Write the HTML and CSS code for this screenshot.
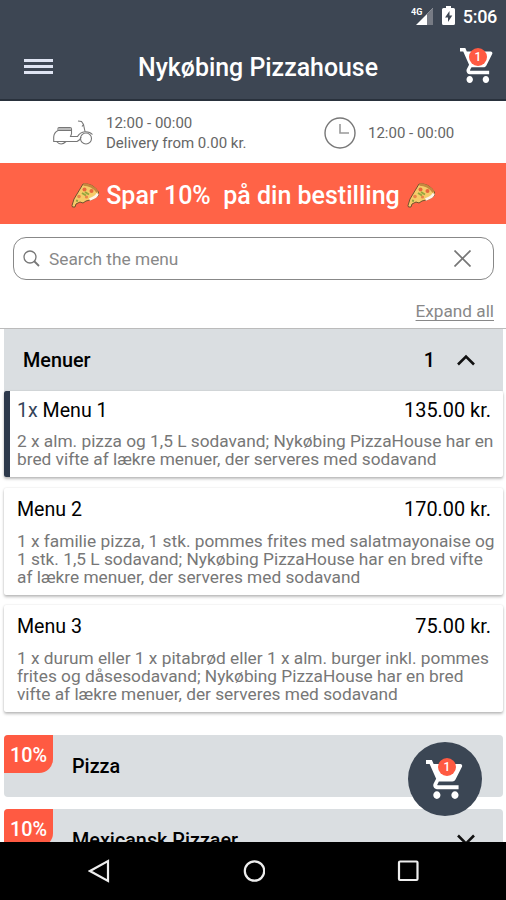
FILE: index.html
```
<!DOCTYPE html>
<html lang="da">
<head>
	<meta charset="utf-8">
	<title>Nykøbing Pizzahouse</title>
	<link rel="stylesheet" href="styles.css">
</head>
<body>
	<!-- Shared icons. -->
	<svg class="sprite" width="0" height="0">
		<symbol id="cart" viewBox="1 2 21 20" preserveAspectRatio="none">
			<path d="M7 18c-1.1 0-1.99.9-1.99 2S5.9 22 7 22s2-.9 2-2-.9-2-2-2zM1 2v2h2l3.6 7.59-1.35 2.45c-.16.28-.25.61-.25.96 0 1.1.9 2 2 2h12v-2H7.42c-.14 0-.25-.11-.25-.25l.03-.12.9-1.63h7.45c.75 0 1.41-.41 1.75-1.03l3.58-6.49c.08-.14.12-.31.12-.48 0-.55-.45-1-1-1H5.21l-.94-2H1zm16 16c-1.1 0-1.99.9-1.99 2s.89 2 1.99 2 2-.9 2-2-.9-2-2-2z"/>
		</symbol>
		<symbol id="pizza" viewBox="0 0 28 26">
			<path d="M1 23.500L3 17L12 2Q22 1 27.500 10L27 14Q23 18 15 19L12 21L9 20L5 22L4 25L1.500 25z" fill="#f6cb69" stroke="#70512f" stroke-width="1"/>
			<path d="M12.500 2.500Q21 2.500 26.500 10" fill="none" stroke="#c4883f" stroke-width="2.600"/>
			<path d="M26.500 11.500Q26 15 18.500 17.500" fill="none" stroke="#fff3ea" stroke-width="2.600"/>
			<circle cx="13.500" cy="7.500" r="2" fill="#e8683c"/>
			<circle cx="20.500" cy="9" r="2" fill="#e8683c"/>
			<circle cx="8" cy="14.500" r="1.800" fill="#e8844a"/>
			<circle cx="15.500" cy="15" r="1.600" fill="#e8844a"/>
			<path d="M11 11L15 13.500M14 10L18 12.500M5 18.500L7 19" stroke="#93a63f" stroke-width="1.900"/>
		</symbol>
	</svg>

	<div class="app">
		<header class="top">
			<div class="status">
				<svg class="signal" width="24" height="20" viewBox="0 0 24 20">
					<path d="M5 19L22 2V19z" fill="#fff"/>
					<path d="M16 8L22 2V19H16z" fill="#777b84"/>
					<text x="0" y="9" class="signal-text">4G</text>
				</svg>
				<svg class="battery" width="13" height="19" viewBox="0 0 13 19">
					<path d="M4 0h5v2h2.500q1.500 0 1.500 1.500v14q0 1.500-1.500 1.500h-10q-1.500 0-1.500-1.500v-14q0-1.500 1.500-1.500h2.500z" fill="#fff"/>
					<path d="M7.500 5L3 11.500h3V16l4.300-6.500H7.500z" fill="#3d4653"/>
				</svg>
				<span class="time">5:06</span>
			</div>
			<div class="bar">
				<div class="burger"><i></i><i></i><i></i></div>
				<h1>Nykøbing Pizzahouse</h1>
				<div class="cart">
					<svg width="34" height="35"><use href="#cart"/></svg>
					<span class="count">1</span>
				</div>
			</div>
		</header>

		<!-- Opening hours. -->
		<div class="hours">
			<svg class="scooter" width="40" height="26" viewBox="0 0 40 26">
				<g fill="none" stroke="#777" stroke-width="1.100">
					<path d="M5 10.500V8.500Q5 7.500 6 7.500H17Q18.500 7.500 18.500 9V14L17.500 16.500H24.500Q27 12 32 11.700Q37 11.500 39.500 14.500"/>
					<path d="M5 10.500H18.500M5 10.500Q1 12.500 .700 17V21.500H24Q27.500 20 28 17"/>
					<path d="M3.500 21.500Q8 26.500 13 21.500M25 1L28.500 1.500L30.500 4.500L29 6.500M30.500 4.500L32 11.500"/>
					<circle cx="33" cy="18.500" r="5.500"/>
				</g>
				<path d="M6 9H18" stroke="#bbb" stroke-width="2"/>
			</svg>
			<div class="delivery">12:00 - 00:00<br>Delivery from 0.00 kr.</div>
			<svg class="clock" width="32" height="32" viewBox="0 0 32 32">
				<circle cx="16" cy="16" r="15" fill="none" stroke="#777" stroke-width="1.400"/>
				<path d="M16 7V16H25" fill="none" stroke="#999" stroke-width="1.600"/>
			</svg>
			<div class="pickup">12:00 - 00:00</div>
		</div>

		<div class="offer">
			<svg width="28" height="26"><use href="#pizza"/></svg>
			<span>Spar 10%&nbsp; på din bestilling</span>
			<svg width="28" height="26"><use href="#pizza"/></svg>
		</div>

		<div class="search">
			<svg width="17" height="17" viewBox="0 0 17 17"><path d="M11 11L16 16" stroke="#777" stroke-width="1.800"/><circle cx="7" cy="7" r="6" fill="none" stroke="#777" stroke-width="1.300"/></svg>
			<span>Search the menu</span>
			<svg class="clear" width="17" height="17" viewBox="0 0 17 17"><path d="M.5.500L16.500 16.500M16.500.500L.5 16.500" stroke="#777" stroke-width="1.700"/></svg>
		</div>
		<div class="expand"><span>Expand all</span></div>

		<main>
			<div class="group open">
				<span class="name">Menuer</span>
				<span class="number">1</span>
				<svg width="18" height="12" viewBox="0 0 18 12"><path d="M1 10.500L9 2.500L17 10.500" fill="none" stroke="#111" stroke-width="2.600"/></svg>
			</div>
			<div class="item selected">
				<div class="line"><span><b>1x</b> Menu 1</span><span class="price">135.00 kr.</span></div>
				<p>2 x alm. pizza og 1,5 L sodavand; Nykøbing PizzaHouse har en<br>bred vifte af lækre menuer, der serveres med sodavand</p>
			</div>
			<div class="item">
				<div class="line"><span>Menu 2</span><span class="price">170.00 kr.</span></div>
				<p>1 x familie pizza, 1 stk. pommes frites med salatmayonaise og<br>1 stk. 1,5 L sodavand; Nykøbing PizzaHouse har en bred vifte<br>af lækre menuer, der serveres med sodavand</p>
			</div>
			<div class="item">
				<div class="line"><span>Menu 3</span><span class="price">75.00 kr.</span></div>
				<p>1 x durum eller 1 x pitabrød eller 1 x alm. burger inkl. pommes<br>frites og dåsesodavand; Nykøbing PizzaHouse har en bred<br>vifte af lækre menuer, der serveres med sodavand</p>
			</div>
			<div class="group closed first">
				<span class="discount">10%</span>
				<span class="name">Pizza</span>
			</div>
			<div class="group closed">
				<span class="discount">10%</span>
				<span class="name">Mexicansk Pizzaer</span>
				<svg width="18" height="12" viewBox="0 0 18 12"><path d="M1 1.500L9 9.500L17 1.500" fill="none" stroke="#111" stroke-width="2.600"/></svg>
			</div>
		</main>

		<!-- Floating cart button. -->
		<div class="fab">
			<div class="cart">
				<svg width="38" height="39"><use href="#cart"/></svg>
				<span class="count">1</span>
			</div>
		</div>

		<nav class="android">
			<svg width="22" height="24" viewBox="0 0 22 24"><path d="M2 12L20 2V22z"/></svg>
			<svg width="22" height="24" viewBox="0 0 22 24"><circle cx="11.500" cy="12" r="9.700"/></svg>
			<svg width="22" height="24" viewBox="0 0 22 24"><rect x="2" y="2.500" width="18.500" height="18.500" rx="1"/></svg>
		</nav>
	</div>
</body>
</html>
```
FILE: styles.css
```
* {
	box-sizing: border-box;
}

body {
	margin: 0;
	font-family: Roboto, sans-serif;
	background: #fff;
}

svg {
	display: block;
	flex: none;
}

.sprite {
	display: none;
}

/* The whole screen, cut off at the bottom by the system buttons. */
.app {
	position: relative;
	display: flex;
	flex-direction: column;
	width: 506px;
	height: 900px;
	overflow: hidden;
	white-space: nowrap;
}

.top {
	flex: none;
	height: 101px;
	background: #3d4653;
	border-bottom: 2px solid #29313c;
	color: #fff;
}

.status {
	display: flex;
	justify-content: flex-end;
	height: 33px;
	padding: 6px 9px 0 0;
}

.signal-text {
	font-size: 9px;
	font-weight: 700;
	fill: #fff;
}

.battery {
	margin: 0 8px 0 7px;
}

.time {
	font-size: 18px;
	font-weight: 500;
	line-height: 21px;
	letter-spacing: -0.3px;
}

.bar {
	display: flex;
	align-items: center;
	height: 66px;
	padding: 0 12px 0 24px;
}

.burger {
	display: grid;
	gap: 3px;
	width: 29px;
}

.burger i {
	height: 3px;
	background: #dfe4f2;
}

h1 {
	margin: 2px auto 0 85px;
	font-size: 24.9px;
	font-weight: 500;
}

.cart {
	position: relative;
	fill: #fff;
}

.bar .cart {
	margin-bottom: 2px;
}

.count {
	position: absolute;
	top: 0;
	left: 9px;
	width: 18px;
	height: 18px;
	border-radius: 50%;
	background: #ff5a42;
	color: #fff;
	font-size: 12px;
	font-weight: 500;
	line-height: 18px;
	text-align: center;
}

.hours {
	display: flex;
	flex: none;
	align-items: center;
	height: 62px;
	padding: 2px 0 0 53px;
	color: #666;
	font-size: 15px;
	line-height: 20px;
}

.delivery {
	width: 142px;
	margin: 0 76px 0 13px;
}

.pickup {
	margin-left: 12px;
}

.offer {
	display: flex;
	flex: none;
	align-items: center;
	justify-content: center;
	gap: 7px;
	height: 61px;
	padding-top: 3px;
	background: #ff6347;
	color: #fff;
	font-size: 25px;
	font-weight: 500;
}

.search {
	display: flex;
	flex: none;
	align-items: center;
	height: 43px;
	margin: 13px 12px 0 13px;
	padding: 0 22px 0 9px;
	border: 1px solid #888;
	border-radius: 13px;
	color: #888;
	font-size: 17.3px;
}

.search span {
	margin: 1px auto 0 9px;
}

.expand {
	flex: none;
	height: 49px;
	padding: 21px 12px 0 0;
	border-bottom: 1px solid #bbb;
	color: #888;
	font-size: 17.2px;
	line-height: 20px;
	text-align: right;
}

.expand span {
	text-decoration: underline;
	text-underline-offset: 3px;
}

main {
	flex: 1;
	min-height: 0;
	padding: 0 3px 0 4px;
	overflow: hidden;
}

.group {
	display: flex;
	align-items: center;
	height: 62px;
	padding: 0 28px 0 19px;
	background: #dadee1;
	font-size: 19.8px;
	font-weight: 500;
}

.number {
	margin: 0 22px 0 auto;
}

.item {
	height: 107px;
	margin-bottom: 10px;
	padding: 10px 12px 0 13px;
	border-radius: 2px;
	box-shadow: 0 2px 3px rgba(0, 0, 0, 0.25), 0 0 2px rgba(0, 0, 0, 0.12);
}

.line {
	display: flex;
	justify-content: space-between;
	font-size: 19.6px;
	line-height: 24px;
}

.line b {
	color: #34445a;
	font-weight: 400;
}

.price {
	font-size: 19.9px;
}

.item p {
	margin: 10px 0 0;
	color: #777;
	font-size: 17.3px;
	line-height: 18px;
}

.selected {
	height: 86px;
	margin-bottom: 11px;
	padding-top: 8px;
	padding-left: 7px;
	border-left: 6px solid #2d394b;
}

.selected p {
	margin-top: 9px;
}

.closed {
	margin-bottom: 12px;
	padding-left: 0;
	border-radius: 4px;
	overflow: hidden;
}

.first {
	margin-top: 23px;
}

.closed .name {
	margin: 1px auto 0 19px;
}

.discount {
	align-self: flex-start;
	width: 49px;
	height: 38px;
	border-radius: 0 0 14px 0;
	background: #ff5a42;
	color: #fff;
	line-height: 42px;
	text-align: center;
}

.fab {
	position: absolute;
	top: 742px;
	left: 408px;
	display: flex;
	align-items: center;
	justify-content: center;
	width: 74px;
	height: 74px;
	border-radius: 50%;
	background: #3b4654;
}

.fab .count {
	top: -2px;
	left: 12px;
}

.android {
	display: flex;
	flex: none;
	align-items: center;
	justify-content: space-between;
	height: 58px;
	padding: 0 87px 0 88px;
	background: #000;
	fill: none;
	stroke: #eee;
	stroke-width: 2.2;
}
```
